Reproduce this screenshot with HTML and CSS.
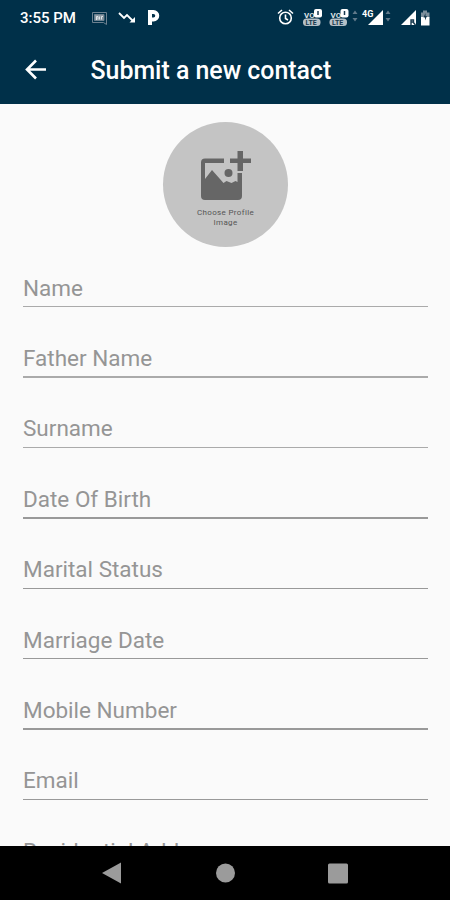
FILE: index.html
```html
<!DOCTYPE html>
<html lang="en">
<head>
<meta charset="utf-8">
<title>Submit a new contact</title>
<link rel="stylesheet" href="styles.css">
</head>
<body>
<div class="screen">
  <div class="status">
    <span class="clock">3:55 PM</span>
    <svg class="notifications" width="72" height="24" viewBox="90 6 72 24">
      <g fill="none" stroke="#6d8190"><path d="M92.500 12.500h14v12l-3-2h-11z"/><path d="M94.500 14.500h9.500v6h-9.500z" fill="#8997a1"/></g>
      <path d="M96.500 20v-3.500h1.500v3m1.500-3v3m2 0v-3h1.500" stroke="#dde3e6" fill="none"/>
      <path d="M119 13l5 5 3-3 6 6" fill="none" stroke="#fff" stroke-width="1.800"/><path d="M135 17v5.500h-5.500z" fill="#fff"/>
      <path d="M150 25V16M150 16.500V12h3.500a3.600 3.600 0 0 1 0 7.500H150" fill="none" stroke="#fff" stroke-width="4"/>
    </svg>
    <svg class="system" width="160" height="24" viewBox="275 6 160 24">
      <g fill="none" stroke="#fff" stroke-width="1.600"><circle cx="285.500" cy="18" r="5.800"/><path d="M285.500 14.500v4l2.500 1.500M278 13.500l4-3.500M293 13.500l-4-3.500"/></g>
      <g id="volte"><rect x="303" y="18.500" width="17.500" height="7.500" rx="3.500" fill="#b5c0c7"/><text x="304" y="17.500" class="vo">VO</text><rect x="314" y="9" width="8" height="8.500" rx="2" fill="#fff"/><path d="M318 11v4" stroke="#17394e" stroke-width="1.500"/><text x="305.500" y="25" class="lte">LTE</text></g>
      <use href="#volte" x="26.500"/>
      <g fill="#60798a"><path d="M352.500 14l2.500-3.500 2.500 3.500zm0 4h5l-2.500 3.500zM385.500 14l2.500-3.500 2.500 3.500zm0 4h5l-2.500 3.500z"/></g>
      <path d="M383 10v15h-15z" fill="#fff"/><text x="362" y="16.500" class="fourg">4G</text>
      <path d="M416 10v15h-15z" fill="#fff"/><path d="M411 25v-5h2.500v2H411m2 0l2.500 3" fill="none" stroke="#17394e" stroke-width="1.400"/>
      <path d="M421 12.500h2v-2h4v2h2.500v5h-8.500z" fill="#7b8e9b"/><path d="M421 17h8.500v8.500H421z" fill="#fff"/><path d="M425.500 13l-2 4.500h1.500v3l2-4.500h-1.500z" fill="#17394e"/>
    </svg>
  </div>
  <header class="bar">
    <svg width="24" height="24" viewBox="0 0 24 24" fill="none" stroke="#fff" stroke-width="2.600"><path d="M22 11.500H4M12 2.500L3 11.500l9 9"/></svg>
    <h1>Submit a new contact</h1>
  </header>
  <main class="form">
    <button class="avatar">
      <svg width="54" height="54" viewBox="0 0 54 54" fill="#666">
        <path d="M25 4.500V9H6v16l7-9 11.500 13 3-2 5 2 4-2 2 1V19H43v23a4 4 0 0 1-4 4H6a4 4 0 0 1-4-4V8.500a4 4 0 0 1 4-4z"/><circle cx="29.500" cy="19" r="4"/><path d="M38.500-3h5.500v7.500h8V9h-8v8h-5.500V9H31V4.500h7.500z"/>
      </svg>
      <span>Choose Profile<br>Image</span>
    </button>
    <div class="field">Name</div>
    <div class="field">Father Name</div>
    <div class="field">Surname</div>
    <div class="field">Date Of Birth</div>
    <div class="field">Marital Status</div>
    <div class="field">Marriage Date</div>
    <div class="field">Mobile Number</div>
    <div class="field">Email</div>
    <div class="field partial">Residential Address</div>
  </main>
  <nav class="nav">
    <svg width="450" height="54" viewBox="0 0 450 54" fill="#9b9b9b"><path d="M102 27l19-10.500v21z"/><circle cx="225.500" cy="27" r="9.500"/><rect x="328" y="17.500" width="20" height="20" rx="1.500"/></svg>
  </nav>
</div>
</body>
</html>
```
FILE: styles.css
```css
* { box-sizing: border-box; }
body { margin: 0; font-family: Roboto, sans-serif; }
.screen { width: 450px; height: 900px; display: flex; flex-direction: column; overflow: hidden; background: #fafafa; }
.status { height: 36px; flex: none; background: #003049; color: #fff; display: flex; align-items: center; padding-left: 20px; }
.clock { width: 70px; font-size: 15px; font-weight: 500; white-space: nowrap; }
.system { margin-left: 113px; }
.vo { font: 700 8px Roboto, sans-serif; fill: #dde3e6; }
.lte { font: 700 7px Roboto, sans-serif; fill: #17394e; }
.fourg { font: 700 9px Roboto, sans-serif; fill: #fff; stroke: #003049; stroke-width: 1.500px; paint-order: stroke; }
.bar { height: 68px; flex: none; background: #003049; color: #fff; display: flex; align-items: center; padding-left: 24px; gap: 42.500px; }
.bar h1 { margin: 0; padding-top: 2px; font-size: 24.900px; font-weight: 500; line-height: 30px; white-space: nowrap; }
.form { flex: 1; min-height: 0; overflow: hidden; padding: 18px 22px 0 23px; }
.avatar { display: flex; flex-direction: column; align-items: center; width: 125px; height: 125px; margin: 0 auto 19px; border: 0; border-radius: 50%; padding: 32px 0 0; background: #c4c4c4; font: 400 8px/10px Roboto, sans-serif; letter-spacing: 0.350px; color: #555; }
.avatar svg { flex: none; overflow: visible; }
.field { height: 70.400px; padding-top: 7.600px; font-size: 22.500px; line-height: 28px; color: #959595; white-space: nowrap; }
.field::after { content: ""; display: block; height: 1.500px; margin-top: 4.400px; background: #999; }
.field:nth-of-type(-n+3)::after { background: #aaa; }
.nav { height: 54px; flex: none; background: #000; }
.nav svg { display: block; }
```
